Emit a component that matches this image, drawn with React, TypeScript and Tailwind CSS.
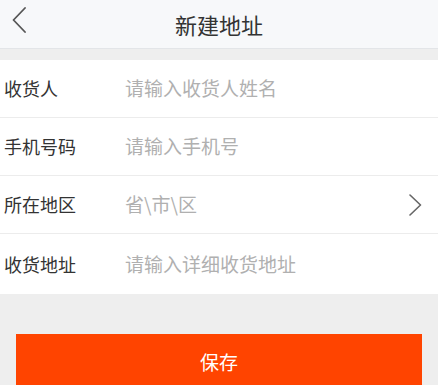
const font = { fontFamily: '"Noto Sans CJK SC", "Noto Sans", sans-serif' };

const rows = [
  { label: "收货人", placeholder: "请输入收货人姓名" },
  { label: "手机号码", placeholder: "请输入手机号" },
  { label: "所在地区", placeholder: "省\\市\\区", arrow: true },
  { label: "收货地址", placeholder: "请输入详细收货地址" },
];

function Chevron({ dir }: { dir: "left" | "right" }) {
  if (dir === "left") {
    return (
      <svg width="14" height="26" viewBox="0 0 14 26" fill="none">
        <path d="M13 1L1.5 13L13 25" stroke="#555" strokeWidth="1.8" strokeLinecap="round" strokeLinejoin="round" />
      </svg>
    );
  }
  return (
    <svg width="13" height="22" viewBox="0 0 13 22" fill="none">
      <path d="M1 1L11.5 11L1 21" stroke="#666" strokeWidth="1.6" strokeLinecap="round" strokeLinejoin="round" />
    </svg>
  );
}

export default function App() {
  return (
    <div className="w-[438px] h-[385px] overflow-hidden bg-[#eeeeee]" style={font}>
      <header className="relative flex h-[49px] items-center justify-center border-b border-[#e3e5e8] bg-[#f7f8fa]">
        <button className="absolute left-[12px] top-[7px]">
          <Chevron dir="left" />
        </button>
        <h1 className="text-[22px] text-[#333]">新建地址</h1>
      </header>

      <div className="mt-[11px] bg-white">
        {rows.map((r, i) => (
          <div
            key={r.label}
            className={`flex items-center pr-[16px] ${i < rows.length - 1 ? "h-[58px] border-b border-[#ececec]" : "h-[60px]"}`}
          >
            <span className="w-[125px] pl-[4px] text-[18px] text-[#333]">{r.label}</span>
            <span className="flex-1 text-[19px] text-[#b0b0b0]">{r.placeholder}</span>
            {r.arrow && <Chevron dir="right" />}
          </div>
        ))}
      </div>

      <div className="px-[16px] pt-[40px]">
        <button className="flex h-[56px] w-full items-center justify-center bg-[#ff4400] text-[19px] text-white">
          保存
        </button>
      </div>
    </div>
  );
}
